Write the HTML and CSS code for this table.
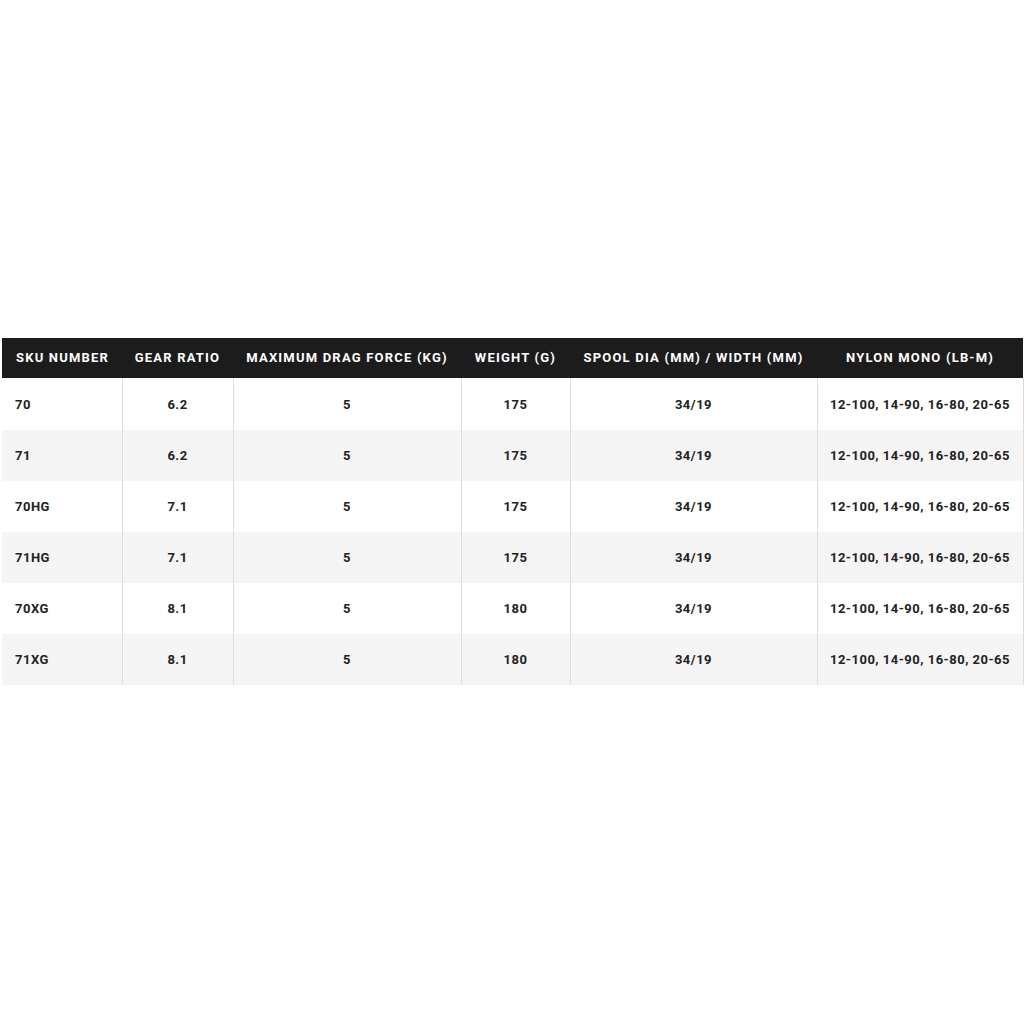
FILE: index.html
```html
<!DOCTYPE html>
<html>
<head>
<meta charset="utf-8">
<link rel="stylesheet" href="styles.css">
</head>
<body>
<div class="wrap">
<table class="specs">
  <colgroup>
    <col class="c1"><col class="c2"><col class="c3"><col class="c4"><col class="c5"><col class="c6">
  </colgroup>
  <thead>
    <tr>
      <th class="left">SKU NUMBER</th>
      <th>GEAR RATIO</th>
      <th>MAXIMUM DRAG FORCE (KG)</th>
      <th>WEIGHT (G)</th>
      <th>SPOOL DIA (MM) / WIDTH (MM)</th>
      <th>NYLON MONO (LB-M)</th>
    </tr>
  </thead>
  <tbody>
    <tr class="first"><td class="left">70</td><td>6.2</td><td>5</td><td>175</td><td>34/19</td><td>12-100, 14-90, 16-80, 20-65</td></tr>
    <tr><td class="left">71</td><td>6.2</td><td>5</td><td>175</td><td>34/19</td><td>12-100, 14-90, 16-80, 20-65</td></tr>
    <tr><td class="left">70HG</td><td>7.1</td><td>5</td><td>175</td><td>34/19</td><td>12-100, 14-90, 16-80, 20-65</td></tr>
    <tr><td class="left">71HG</td><td>7.1</td><td>5</td><td>175</td><td>34/19</td><td>12-100, 14-90, 16-80, 20-65</td></tr>
    <tr><td class="left">70XG</td><td>8.1</td><td>5</td><td>180</td><td>34/19</td><td>12-100, 14-90, 16-80, 20-65</td></tr>
    <tr><td class="left">71XG</td><td>8.1</td><td>5</td><td>180</td><td>34/19</td><td>12-100, 14-90, 16-80, 20-65</td></tr>
  </tbody>
</table>
</div>
</body>
</html>
```
FILE: styles.css
```css
html, body {
  margin: 0;
  padding: 0;
  background: #ffffff;
}
.wrap {
  padding: 338px 1px 0 2px;
}
.specs {
  width: 1021px;
  border-collapse: collapse;
  table-layout: fixed;
  font-family: Roboto, "Liberation Sans", sans-serif;
  font-weight: 700;
  font-size: 13px;
  color: #222222;
}
.c1 { width: 120px; }
.c2 { width: 111px; }
.c3 { width: 228px; }
.c4 { width: 109px; }
.c5 { width: 247px; }
.c6 { width: 206px; }
.specs th {
  background: #1c1c1c;
  color: #ffffff;
  height: 38px;
  padding: 0 0 2px 0;
  text-align: center;
  letter-spacing: 1.2px;
  font-weight: 700;
  white-space: nowrap;
}
.specs td {
  height: 51px;
  padding: 0;
  text-align: center;
  border-left: 1px solid #dddddd;
  white-space: nowrap;
  letter-spacing: 0.5px;
}
.specs tr.first td {
  height: 52px;
}
.specs td:last-child {
  border-right: 1px solid #dddddd;
}
.specs td:first-child {
  border-left: none;
}
.specs .left {
  text-align: left;
  padding-left: 13px;
}
.specs th.left {
  padding-left: 14px;
}
.specs tbody tr:nth-child(even) td {
  background: #f5f5f5;
}
```
